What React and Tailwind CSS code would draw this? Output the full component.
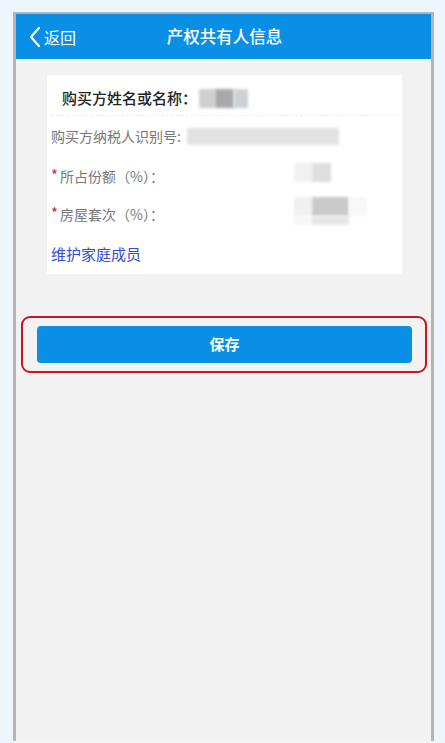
import React from 'react';

const font = { fontFamily: '"Noto Sans CJK SC", "Noto Sans", sans-serif' };

function Blur({ className }) {
  return <div className={`blur-[1.5px] ${className}`} />;
}

export default function App() {
  return (
    <div
      className="w-[445px] h-[743px] bg-[#edf6fd] pt-[12px] pl-[13px] pr-[11px] overflow-hidden"
      style={font}
    >
      <div className="h-[729px] border-x-[3px] border-t-2 border-[#b4b4b4] bg-[#f2f2f2] flex flex-col">
        {/* Header */}
        <div className="h-[45px] bg-[#0a8fe6] relative flex items-center justify-center text-white shrink-0">
          <div className="absolute left-[12px] top-0 h-full flex items-center">
            <svg width="14" height="22" viewBox="0 0 14 22" fill="none">
              <path d="M11 2L3 11l8 9" stroke="white" strokeWidth="2.2" strokeLinecap="round" strokeLinejoin="round" />
            </svg>
            <span className="text-[16px] ml-[2px] leading-none">返回</span>
          </div>
          <span className="text-[16.5px] font-medium leading-none ml-[2px]">产权共有人信息</span>
        </div>

        {/* Body */}
        <div className="pl-[31px] pr-[29px] pt-[16px]">
          <div className="bg-white h-[199px] pt-[12px] px-[4px]">
            <div className="flex items-center h-[24px] pl-[11px] pb-[2px]">
              <span className="text-[15px] font-medium text-[#222]">购买方姓名或名称：</span>
              <div className="flex ml-[2px] h-[19px]">
                <Blur className="w-[16px] bg-[#cfcfcf]" />
                <Blur className="w-[19px] bg-[#a9a9a9]" />
                <Blur className="w-[14px] bg-[#cdd0d4]" />
              </div>
            </div>
            <div className="border-b border-dashed border-[#ececec] mt-[4px]" />
            <div className="flex items-center h-[24px] mt-[8px]">
              <span className="text-[14px] text-[#777]">购买方纳税人识别号:</span>
              <Blur className="ml-[6px] w-[152px] h-[17px] bg-[#e2e2e2]" />
            </div>
            <div className="flex items-center h-[24px] mt-[16px] relative">
              <span className="text-[#e02020] text-[15px] leading-none mt-[-4px]">*</span>
              <span className="text-[14px] text-[#777] ml-[2px]">所占份额（%）：</span>
              <div className="absolute left-[243px] top-[-1px] flex h-[19px]">
                <Blur className="w-[18px] bg-[#f1f1f1]" />
                <Blur className="w-[19px] bg-[#dedede]" />
              </div>
            </div>
            <div className="flex items-center h-[24px] mt-[14px] relative">
              <span className="text-[#e02020] text-[15px] leading-none mt-[-4px]">*</span>
              <span className="text-[14px] text-[#777] ml-[2px]">房屋套次（%）：</span>
              <div className="absolute left-[243px] top-[-5px] flex flex-col">
                <div className="flex h-[19px]">
                  <Blur className="w-[18px] bg-[#f0f0f0]" />
                  <Blur className="w-[37px] bg-[#c9c9c9]" />
                  <Blur className="w-[18px] bg-[#f8f8f8]" />
                </div>
                <div className="flex h-[9px]">
                  <Blur className="w-[18px] bg-[#f6f6f6]" />
                  <Blur className="w-[37px] bg-[#e6e6e6]" />
                </div>
              </div>
            </div>
            <div className="mt-[18px] text-[15px] text-[#2f4ad8] leading-[20px]">维护家庭成员</div>
          </div>
        </div>

        {/* Save */}
        <div className="pl-[5px] pr-[4px] mt-[42px]">
          <div className="border-2 border-[#c8161d] rounded-[9px] pl-[14px] pr-[13px] py-[8px]">
            <button className="w-full h-[37px] rounded-[4px] bg-[#0a8fe6] text-white text-[15px] font-bold">
              保存
            </button>
          </div>
        </div>
      </div>
    </div>
  );
}
